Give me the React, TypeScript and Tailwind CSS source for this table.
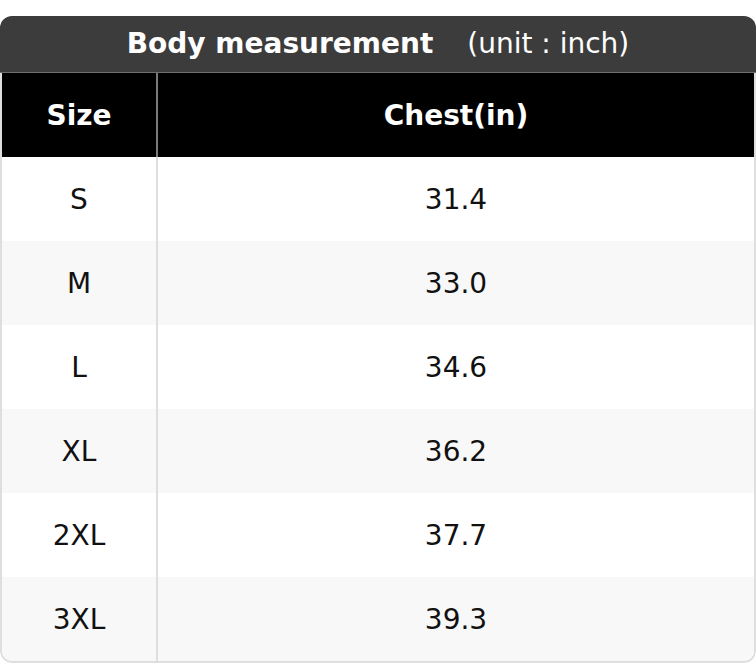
export default function App() {
  const rows = [
    ["S", "31.4"],
    ["M", "33.0"],
    ["L", "34.6"],
    ["XL", "36.2"],
    ["2XL", "37.7"],
    ["3XL", "39.3"],
  ];
  return (
    <div className="bg-white pt-4 w-[756px] h-[664px]" style={{ fontFamily: '"DejaVu Sans", sans-serif' }}>
      <div className="rounded-[12px] overflow-hidden">
        <div className="h-[57px] bg-[#3c3c3c] border-b border-[#6e6e6e] flex items-center justify-center text-white text-[28px] leading-none">
          <span className="font-bold">Body measurement</span>
          <span className="ml-[34px] font-normal">(unit : inch)</span>
        </div>
        <div className="border-x-2 border-b-2 border-[#dedede] rounded-b-[12px] overflow-hidden">
          <div className="flex h-[84px] bg-black text-white font-bold text-[28px] pt-[2px]">
            <div className="w-[156px] flex items-center justify-center border-r-2 border-[#7a7a7a] -mt-[2px] pt-[2px]">Size</div>
            <div className="flex-1 flex items-center justify-center">Chest(in)</div>
          </div>
          {rows.map((r, i) => (
            <div key={r[0]} className={`flex h-[84px] text-[28px] text-[#111] ${i % 2 === 1 ? "bg-[#f8f8f8]" : "bg-white"}`}>
              <div className="w-[156px] flex items-center justify-center border-r-2 border-[#dedede] pt-[2px]">{r[0]}</div>
              <div className="flex-1 flex items-center justify-center pt-[2px]">{r[1]}</div>
            </div>
          ))}
        </div>
      </div>
    </div>
  );
}
